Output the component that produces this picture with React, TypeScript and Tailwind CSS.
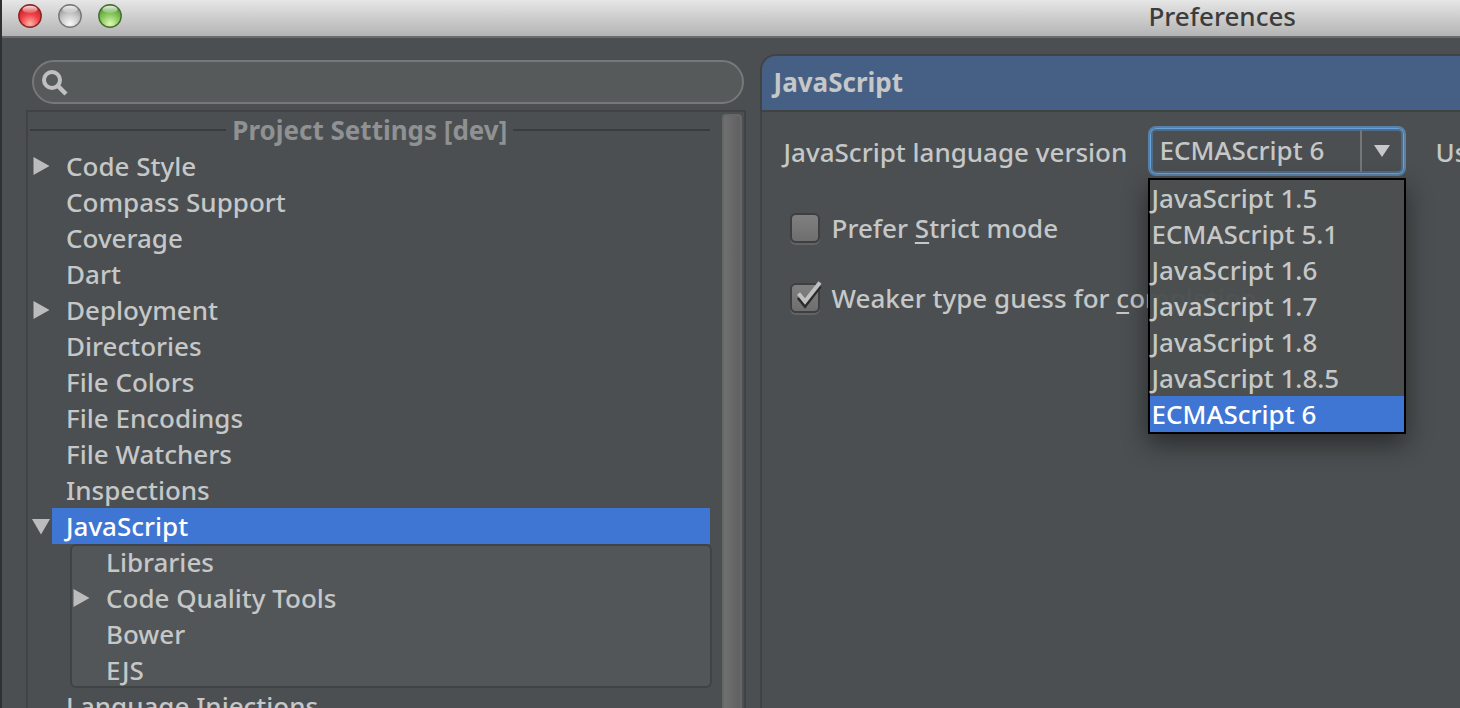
import { useState } from "react";

type Item = { label: string; open?: boolean; children?: Item[] };

const items: Item[] = [
  { label: "Code Style", children: [] },
  { label: "Compass Support" },
  { label: "Coverage" },
  { label: "Dart" },
  { label: "Deployment", children: [] },
  { label: "Directories" },
  { label: "File Colors" },
  { label: "File Encodings" },
  { label: "File Watchers" },
  { label: "Inspections" },
  {
    label: "JavaScript",
    open: true,
    children: [
      { label: "Libraries" },
      { label: "Code Quality Tools", children: [] },
      { label: "Bower" },
      { label: "EJS" },
    ],
  },
  { label: "Language Injections" },
];

const versions = [
  "JavaScript 1.5",
  "ECMAScript 5.1",
  "JavaScript 1.6",
  "JavaScript 1.7",
  "JavaScript 1.8",
  "JavaScript 1.8.5",
  "ECMAScript 6",
];

function Light({ id, rim, edge, mid, glow, label }: { id: string; rim: string; edge: string; mid: string; glow: string; label: string }) {
  return (
    <button type="button" aria-label={label} className="size-6">
      <svg viewBox="0 0 24 24" className="size-6">
        <defs>
          <radialGradient id={id} cx="0.5" cy="0.85" r="0.85">
            <stop offset="0" stopColor={glow} />
            <stop offset="0.5" stopColor={mid} />
            <stop offset="1" stopColor={edge} />
          </radialGradient>
          <linearGradient id={id + "-shine"} x1="0" y1="0" x2="0" y2="1">
            <stop offset="0" stopColor="#fff" stopOpacity="0.85" />
            <stop offset="1" stopColor="#fff" stopOpacity="0.15" />
          </linearGradient>
        </defs>
        <circle cx="12" cy="12" r="11.2" fill={`url(#${id})`} stroke={rim} strokeWidth="1.4" />
        <ellipse cx="12" cy="5.4" rx="7.5" ry="3.6" fill={`url(#${id}-shine)`} />
      </svg>
    </button>
  );
}

function Arrow({ open }: { open?: boolean }) {
  return (
    <svg viewBox="0 0 18 18" className="size-[18px] fill-[#bcbcbc]">
      {open ? <path d="M0 2h18L9 17.500z" /> : <path d="M1.500 0v18l16-9z" />}
    </svg>
  );
}

function Row({ item, selected, nested, onSelect }: { item: Item; selected: string; nested?: boolean; onSelect: (s: string) => void }) {
  const active = item.label === selected;
  return (
    <li>
      <div className="flex h-9 items-center">
        {item.children ? (
          <button
            type="button"
            aria-label={"Toggle " + item.label}
            className={nested ? "w-[22px] shrink-0 pl-0.5" : "w-6 shrink-0 pl-1"}
          >
            <Arrow open={item.open} />
          </button>
        ) : (
          <span className={nested ? "w-[22px] shrink-0" : "w-6 shrink-0"} />
        )}
        <button
          type="button"
          onClick={() => onSelect(item.label)}
          className={
            active
              ? "h-9 flex-1 bg-[#3f76d4] pl-3.5 text-left text-white"
              : "h-9 flex-1 pl-3.5 text-left"
          }
        >
          {item.label}
        </button>
      </div>
      {item.open && item.children && (
        <ul className="-mr-0.5 ml-[42px] rounded-md bg-[#525658] pr-0.5 shadow-[inset_0_0_0_2px_#404345]">
          {item.children.map((c) => (
            <Row key={c.label} item={c} nested selected={selected} onSelect={onSelect} />
          ))}
        </ul>
      )}
    </li>
  );
}

function Check({ id, checked, onChange, children }: { id: string; checked: boolean; onChange: () => void; children: React.ReactNode }) {
  return (
    <div className="flex h-9 items-center gap-3">
      <span className="relative flex size-[30px] shrink-0">
        <input
          id={id}
          type="checkbox"
          checked={checked}
          onChange={onChange}
          className="size-[30px] appearance-none rounded-md border-2 border-[#3d3f41] bg-linear-to-b from-[#808080] to-[#6e6e6e] shadow-[0_2px_0_#606465]"
        />
        {checked && (
          <svg viewBox="0 0 34 34" className="pointer-events-none absolute -top-1 left-0 size-[34px] fill-none">
            <path d="M8.500 18.500l6.500 8L30 7" stroke="#2b2b2b" strokeWidth="4" />
            <path d="M8.500 14.500l6.500 8L30 3.500" stroke="#c0c0c0" strokeWidth="4" />
          </svg>
        )}
      </span>
      <label htmlFor={id}>{children}</label>
    </div>
  );
}

export default function App() {
  const [selected, setSelected] = useState("JavaScript");
  const [version, setVersion] = useState("ECMAScript 6");
  const [strict, setStrict] = useState(false);
  const [weak, setWeak] = useState(true);

  return (
    <div className="flex h-screen flex-col overflow-hidden border-l-2 border-[#2e3032] bg-[#4b4f51] font-['Noto_Sans',sans-serif] text-[26px] leading-9 font-medium whitespace-nowrap text-[#c6c7c7]">
      <header className="flex h-[38px] shrink-0 items-center justify-between border-b-2 border-[#6b6b6b] bg-linear-to-b from-[#e6e6e6] to-[#b4b4b4] pr-[164px] pl-4">
        <div className="flex items-center gap-4 pb-1">
          <Light id="close" label="Close" rim="#8d2323" edge="#b81d22" mid="#f04248" glow="#ffb3a8" />
          <Light id="min" label="Minimize" rim="#777777" edge="#8e8e8e" mid="#c9c9c9" glow="#f8f8f8" />
          <Light id="zoom" label="Zoom" rim="#41702b" edge="#4c8a31" mid="#86c95c" glow="#e4f8b4" />
        </div>
        <h1 className="pb-1 text-[#3c3c3c]">Preferences</h1>
      </header>

      <div className="flex min-h-0 flex-1 gap-3.5">
        <aside className="flex w-[51%] shrink-0 flex-col pt-[22px] pl-6">
          <div className="relative mr-0.5 ml-1.5 flex">
            <svg viewBox="0 0 28 28" className="pointer-events-none absolute top-[9px] left-[9px] size-7 fill-none stroke-[#c0c0c0]">
              <circle cx="11" cy="11" r="8" strokeWidth="4" />
              <path d="M16.500 16.500l8.500 8.500" strokeWidth="4.500" />
            </svg>
            <input
              type="search"
              aria-label="Search settings"
              className="h-11 w-full appearance-none rounded-full border-2 border-[#777879] bg-[#565a5b] pr-5 pl-11 outline-none"
            />
          </div>
          <nav aria-label="Settings" className="mt-1.5 flex min-h-0 flex-1 overflow-hidden border-2 border-b-0 border-[#404244]">
            <div className="flex-1">
              <h2 className="flex h-9 items-center gap-1.5 pl-0.5 font-bold text-[#8f9192]">
                <span className="h-0.5 flex-1 bg-[#3b3c3d]" />
                Project Settings [dev]
                <span className="h-0.5 flex-1 bg-[#3b3c3d]" />
              </h2>
              <ul>
                {items.map((i) => (
                  <Row key={i.label} item={i} selected={selected} onSelect={setSelected} />
                ))}
              </ul>
            </div>
            <div className="mt-0.5 mr-0.5 ml-3 w-5 rounded-t-sm border-2 border-b-0 border-[#666767] bg-linear-to-r from-[#707070] to-[#606060]" />
          </nav>
        </aside>

        <main className="mt-4 min-w-0 flex-1 rounded-tl-2xl border-t-2 border-l-2 border-[#404244]">
          <h2 className="h-14 rounded-tl-[14px] border-b-2 border-[#404244] bg-[#466085] pt-2 pl-3 font-bold">JavaScript</h2>
          <div className="flex flex-col pt-3.5 pl-[22px]">
            <div className="flex items-center">
              <label htmlFor="version" className="w-[364px] shrink-0 pt-0.5">JavaScript language version</label>
              <div className="relative flex w-[258px] shrink-0">
                <select
                  id="version"
                  value={version}
                  onChange={(e) => setVersion(e.target.value)}
                  className="h-[50px] w-full appearance-none rounded-lg border-2 border-[#5781aa] bg-[#4b4f51] pb-0.5 pl-2.5 shadow-[inset_0_0_0_1px_#6aa3dc,inset_0_0_0_3px_#4f6b87] outline-none"
                >
                  {versions.map((v) => (
                    <option key={v}>{v}</option>
                  ))}
                </select>
                <span className="pointer-events-none absolute inset-y-1 right-1 flex w-[42px] items-center justify-center border-l-2 border-[#747677]">
                  <svg viewBox="0 0 16 12" className="h-3 w-4 fill-[#c8c8c8]">
                    <path d="M0 0h16L8 12z" />
                  </svg>
                </span>
                <ul
                  role="listbox"
                  aria-label="Language versions"
                  className="absolute top-[52px] left-0 z-10 w-full border-2 border-black bg-[#4b4f51]/97 shadow-[0_10px_24px_rgba(0,0,0,0.45)]"
                >
                  {versions.map((v) => (
                    <li
                      key={v}
                      role="option"
                      aria-selected={v === version}
                      onClick={() => setVersion(v)}
                      className={v === version ? "h-9 bg-[#3f76d4] pl-0.5 text-white" : "h-9 pl-0.5"}
                    >
                      {v}
                    </li>
                  ))}
                </ul>
              </div>
              <span className="pt-0.5 pl-[30px]">Us</span>
            </div>
            <div className="flex flex-col gap-[34px] pt-[34px] pl-1.5">
              <Check id="strict" checked={strict} onChange={() => setStrict(!strict)}>
                Prefer <u className="underline-offset-4">S</u>trict mode
              </Check>
              <Check id="weak" checked={weak} onChange={() => setWeak(!weak)}>
                Weaker type guess for <u className="underline-offset-4">c</u>ompletion
              </Check>
            </div>
          </div>
        </main>
      </div>
    </div>
  );
}
